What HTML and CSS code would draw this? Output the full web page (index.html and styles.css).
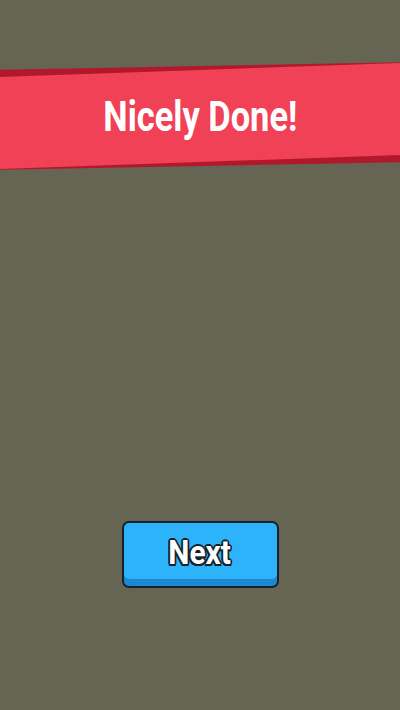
FILE: index.html
```html
<!DOCTYPE html>
<html>
<head>
<meta charset="utf-8">
<link rel="stylesheet" href="styles.css">
</head>
<body>
<div class="screen">
  <div class="banner">
    <div class="banner-shadow">
      <div class="banner-face">
        <span class="banner-title">Nicely Done!</span>
      </div>
    </div>
  </div>
  <div class="actions">
    <button class="next-btn"><span class="next-label">Next</span></button>
  </div>
</div>
</body>
</html>
```

FILE: styles.css
```css
html, body {
  margin: 0;
  padding: 0;
  background: #666553;
}
.screen {
  width: 400px;
  height: 710px;
  overflow: hidden;
  background: #666553;
  font-family: Roboto, "Liberation Sans", sans-serif;
}
.banner {
  padding-top: 66px;
  margin-left: -15px;
  width: 430px;
}
.banner-shadow {
  height: 100px;
  background: #b2182b;
  transform: rotate(-1.07deg);
  display: flex;
  align-items: center;
}
.banner-face {
  width: 100%;
  height: 92px;
  background: #f14156;
  transform: rotate(-0.93deg);
  display: flex;
  align-items: center;
  justify-content: center;
}
.banner-title {
  display: inline-block;
  color: #ffffff;
  font-weight: 700;
  font-size: 42px;
  line-height: 1;
  transform: rotate(2deg) scaleX(0.82);
  margin-top: 2px;
}
.actions {
  margin-top: 355px;
  display: flex;
  justify-content: center;
}
.next-btn {
  width: 157px;
  height: 67px;
  box-sizing: border-box;
  border: 2px solid #16212a;
  border-radius: 7px;
  background: #2db3fa;
  box-shadow: inset 0 -7px 0 #1a88d2;
  padding: 0 0 6px 0;
  display: flex;
  align-items: center;
  justify-content: center;
  font-family: Roboto, "Liberation Sans", sans-serif;
}
.next-label {
  display: inline-block;
  color: #ffffff;
  font-weight: 700;
  font-size: 34px;
  line-height: 1;
  transform: scaleX(0.88);
  text-shadow:
    2px 0 0 #16212a, -2px 0 0 #16212a, 0 2px 0 #16212a, 0 -2px 0 #16212a,
    1.5px 1.5px 0 #16212a, -1.5px 1.5px 0 #16212a, 1.5px -1.5px 0 #16212a, -1.5px -1.5px 0 #16212a;
}
```
